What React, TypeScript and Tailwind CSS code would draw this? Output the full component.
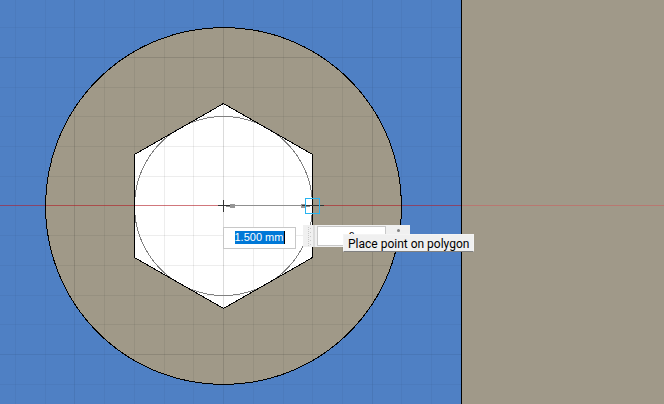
import { useState } from 'react';

const columns = [15, 45, 74, 104, 134, 164, 193, 223, 253, 283, 312, 342, 372, 401, 431];
const rows = [27, 57, 87, 116, 146, 176, 205, 235, 265, 295, 324, 354, 384];
const majorColumns = [74, 223, 372];
const majorRows = [57, 205, 354];
const HEXAGON = '223.5,103.5 312.5,154.5 312.5,257.5 223.5,308.5 134.5,257.5 134.5,154.5';

function Grid() {
  return (
    <g>
      {columns.map((x) => (
        <rect key={x} x={x} y={0} width={1} height="100%" fill="#000" fillOpacity={majorColumns.includes(x) ? 0.14 : 0.07} />
      ))}
      {rows.map((y) => (
        <rect key={y} x={0} y={y} width={461} height={1} fill="#000" fillOpacity={majorRows.includes(y) ? 0.14 : 0.07} />
      ))}
    </g>
  );
}

function Sketch() {
  return (
    <svg className="block h-full w-full" role="img" aria-label="Sketch" shapeRendering="crispEdges">
      <defs>
        <clipPath id="ring">
          <ellipse cx={223.5} cy={206} rx={178} ry={178.5} />
        </clipPath>
        <clipPath id="hole">
          <polygon points={HEXAGON} />
        </clipPath>
      </defs>
      <rect width="100%" height="100%" fill="#4f80c4" />
      <g opacity={0.45}>
        <Grid />
      </g>
      <ellipse cx={223.5} cy={206} rx={178} ry={178.5} fill="#a09989" />
      <g clipPath="url(#ring)" opacity={0.8}>
        <Grid />
      </g>
      <polygon points={HEXAGON} fill="#fff" />
      <g clipPath="url(#hole)">
        <Grid />
      </g>

      {/* solid body on the right covers the grid */}
      <rect x={461} y={0} width="100%" height="100%" fill="#a09989" />
      <rect x={0} y={205} width={218} height={1} fill="#c8141e" fillOpacity={0.5} />
      <rect x={312} y={205} width={149} height={1} fill="#c8141e" fillOpacity={0.5} />
      <rect x={461} y={205} width="100%" height={1} fill="#e63c46" fillOpacity={0.35} />
      <rect x={461} y={0} width={1} height="100%" fill="#000" />

      <ellipse cx={223.5} cy={206} rx={178} ry={178.5} fill="none" stroke="#000" />
      <ellipse cx={223.5} cy={206} rx={89} ry={89.5} fill="none" stroke="#808080" />
      <polygon points={HEXAGON} fill="none" stroke="#000" />

      {/* radius dimension */}
      <rect x={229} y={205} width={74} height={1} fill="#909090" />
      <rect x={226} y={206} width={6} height={1} fill="#909090" />
      <rect x={230} y={204} width={5} height={4} fill="#969696" />
      <rect x={301} y={204} width={5} height={4} fill="#969696" />
      <rect x={305} y={206} width={5} height={1} fill="#909090" />

      <rect x={218} y={205} width={12} height={1} fill="#333" />
      <rect x={223} y={200} width={1} height={12} fill="#333" />
      <rect x={302} y={205} width={22} height={1} fill="#333" />
      <g fill="#28b4f0">
        <rect x={305} y={198} width={15} height={1} />
        <rect x={305} y={213} width={15} height={1} />
        <rect x={305} y={198} width={1} height={16} />
        <rect x={319} y={198} width={1} height={16} />
      </g>
    </svg>
  );
}

export default function App() {
  const [diameter, setDiameter] = useState('1.500 mm');
  const [edges, setEdges] = useState('6');

  return (
    <main className="relative h-screen overflow-hidden text-black">
      <Sketch />

      <div className="absolute left-[223px] top-[227px] flex h-[22px] w-[73px] items-start justify-center border border-[#c8c8c8] bg-white pt-[3px]">
        <input
          aria-label="Diameter"
          value={diameter}
          onChange={(e) => setDiameter(e.target.value)}
          className="h-[13px] w-[50px] border-r border-black bg-[#0078d7] font-['Liberation_Sans',sans-serif] text-[11px] leading-[13px] text-white outline-none"
        />
      </div>

      <div className="absolute left-[303px] top-[225px] flex h-[22px] w-[107px] items-center bg-[#f0f0f0]">
        <svg className="h-[22px] w-[14px]" shapeRendering="crispEdges" aria-hidden="true">
          {[2, 6, 10, 14, 18].map((y) => (
            <g key={y} fill="#c8c8c8">
              <rect x={5} y={y} width={1} height={1} />
              <rect x={7} y={y + 1} width={1} height={1} />
              <rect x={5} y={y + 2} width={1} height={1} />
            </g>
          ))}
          <rect x={10} y={0} width={2} height={22} fill="#dcdcdc" />
        </svg>
        <input
          aria-label="Edge number"
          value={edges}
          onChange={(e) => setEdges(e.target.value)}
          className="h-5 w-[69px] border border-[#c8c8c8] bg-white text-center font-['Liberation_Sans',sans-serif] text-[11px] outline-none"
        />
        <button type="button" aria-label="Options" className="flex h-full grow items-start justify-center pt-1">
          <svg width="3" height="3" aria-hidden="true">
            <circle cx="1.5" cy="1.5" r="1.5" fill="#808080" />
          </svg>
        </button>
      </div>

      <div
        role="tooltip"
        className="absolute left-[343px] top-[234px] border border-[#f4f4f4] border-b-[#808080] bg-[#f0f0f0] px-1 pt-[2px] font-[Roboto,sans-serif] text-xs leading-[14px] whitespace-nowrap"
      >
        Place point on polygon
      </div>
    </main>
  );
}
